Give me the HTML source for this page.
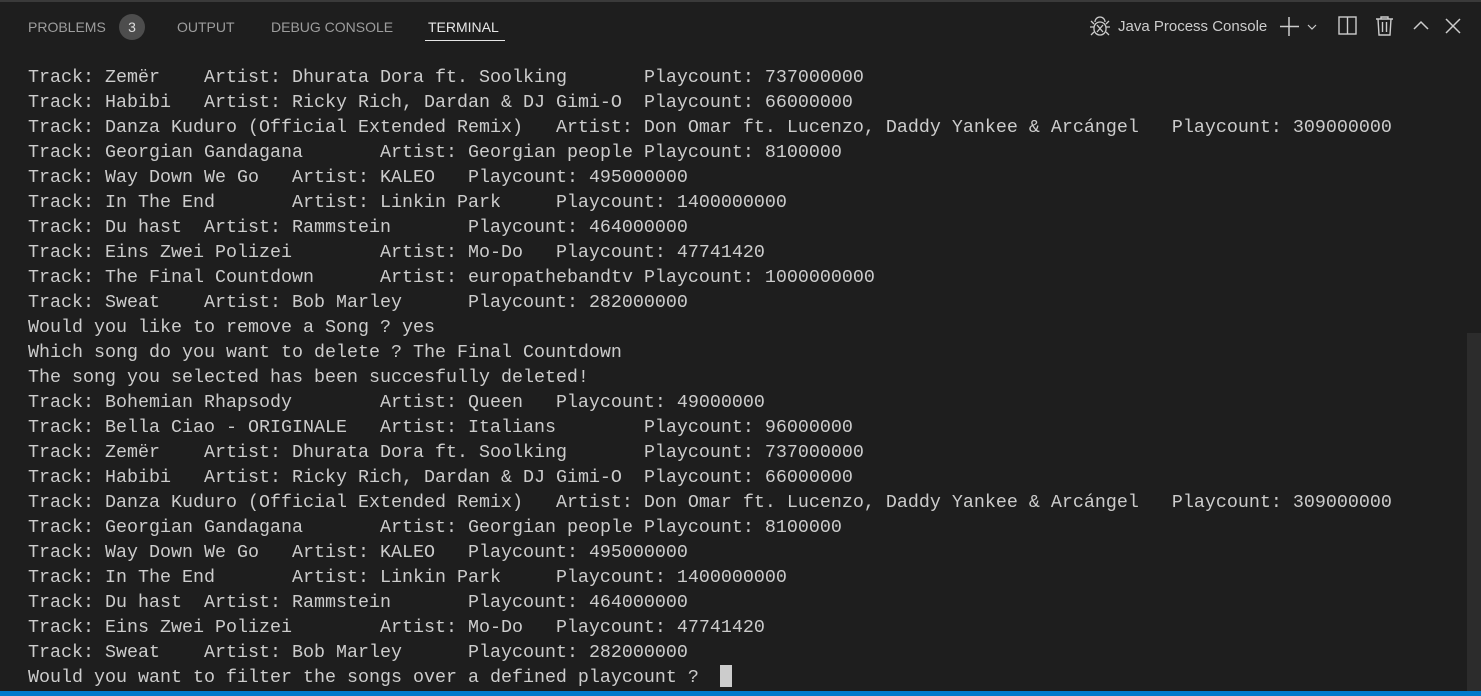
<!DOCTYPE html>
<html><head><meta charset="utf-8"><style>
html,body{margin:0;padding:0;width:1481px;height:696px;overflow:hidden;background:#1e1e1e;position:relative;font-family:"Liberation Sans",sans-serif}
.top{position:absolute;left:0;top:0;width:1481px;height:2px;background:#3a3a3a}
.tab{position:absolute;top:19px;font-size:14px;color:#9d9d9d;letter-spacing:0}
.badge{position:absolute;left:119px;top:14px;width:26px;height:26px;border-radius:13px;background:#4d4d4d;color:#ddd;font-size:14px;text-align:center;line-height:26px}
.ul{position:absolute;left:425px;top:40px;width:80px;height:1px;background:#e7e7e7}
pre{position:absolute;left:28px;top:65px;margin:0;font-family:"Liberation Mono",monospace;font-size:18.33px;line-height:25px;color:#cccccc;tab-size:8;-moz-tab-size:8}
.cur{position:absolute;left:720px;top:665px;width:12px;height:22px;background:#cccccc}
.sb{position:absolute;left:1467px;top:333px;width:14px;height:358px;background:#2c2c2c}
.status{position:absolute;left:0;top:691px;width:1481px;height:5px;background:#007acc}
svg{position:absolute}
</style></head><body>
<div class="top"></div>
<div class="tab" style="left:28px">PROBLEMS</div>
<div class="badge">3</div>
<div class="tab" style="left:177px">OUTPUT</div>
<div class="tab" style="left:271px">DEBUG CONSOLE</div>
<div class="tab" style="left:428px;color:#e7e7e7">TERMINAL</div>
<div class="ul"></div>

<svg style="left:1088px;top:14px" width="24" height="26" viewBox="0 0 24 26" fill="none" stroke="#ccc" stroke-width="1.3">
<path d="M7 8a5 5 0 0 1 10 0"/><rect x="6" y="8" width="12" height="13" rx="6"/><path d="M9 11l6 7M15 11l-6 7M2 13h4M18 13h4M3 7l3 3M21 7l-3 3M3 21l3-3M21 21l-3-3"/></svg>
<div class="tab" style="left:1118px;top:18px;color:#ccc;font-size:15px">Java Process Console</div>
<svg style="left:1278px;top:15px" width="50" height="22" fill="none" stroke="#ccc" stroke-width="1.5"><path d="M11 2v19M2 11.5h19"/><path d="M30 10l4 4 4-4" stroke-width="1.2"/></svg>
<svg style="left:1337px;top:15px" width="22" height="22" fill="none" stroke="#ccc" stroke-width="1.4"><rect x="2" y="2" width="17" height="17"/><path d="M10.5 2v17"/></svg>
<svg style="left:1374px;top:15px" width="22" height="22" fill="none" stroke="#ccc" stroke-width="1.4"><path d="M2 4h17M7 4V2h7v2M4 4l1 16h11l1-16M8.5 7v10M12.5 7v10"/></svg>
<svg style="left:1412px;top:17px" width="18" height="18" fill="none" stroke="#ccc" stroke-width="1.5"><path d="M2 12l7-7 7 7"/></svg>
<svg style="left:1444px;top:17px" width="18" height="18" fill="none" stroke="#ccc" stroke-width="1.5"><path d="M2 2l14 14M16 2L2 16"/></svg>

<pre>Track: Zemër	Artist: Dhurata Dora ft. Soolking	Playcount: 737000000
Track: Habibi	Artist: Ricky Rich, Dardan &amp; DJ Gimi-O	Playcount: 66000000
Track: Danza Kuduro (Official Extended Remix)	Artist: Don Omar ft. Lucenzo, Daddy Yankee &amp; Arcángel	Playcount: 309000000
Track: Georgian Gandagana	Artist: Georgian people	Playcount: 8100000
Track: Way Down We Go	Artist: KALEO	Playcount: 495000000
Track: In The End	Artist: Linkin Park	Playcount: 1400000000
Track: Du hast	Artist: Rammstein	Playcount: 464000000
Track: Eins Zwei Polizei	Artist: Mo-Do	Playcount: 47741420
Track: The Final Countdown	Artist: europathebandtv	Playcount: 1000000000
Track: Sweat	Artist: Bob Marley	Playcount: 282000000
Would you like to remove a Song ? yes
Which song do you want to delete ? The Final Countdown
The song you selected has been succesfully deleted!
Track: Bohemian Rhapsody	Artist: Queen	Playcount: 49000000
Track: Bella Ciao - ORIGINALE	Artist: Italians	Playcount: 96000000
Track: Zemër	Artist: Dhurata Dora ft. Soolking	Playcount: 737000000
Track: Habibi	Artist: Ricky Rich, Dardan &amp; DJ Gimi-O	Playcount: 66000000
Track: Danza Kuduro (Official Extended Remix)	Artist: Don Omar ft. Lucenzo, Daddy Yankee &amp; Arcángel	Playcount: 309000000
Track: Georgian Gandagana	Artist: Georgian people	Playcount: 8100000
Track: Way Down We Go	Artist: KALEO	Playcount: 495000000
Track: In The End	Artist: Linkin Park	Playcount: 1400000000
Track: Du hast	Artist: Rammstein	Playcount: 464000000
Track: Eins Zwei Polizei	Artist: Mo-Do	Playcount: 47741420
Track: Sweat	Artist: Bob Marley	Playcount: 282000000
Would you want to filter the songs over a defined playcount ? </pre>
<div class="cur"></div>
<div class="sb"></div>
<div class="status"></div>
</body></html>
